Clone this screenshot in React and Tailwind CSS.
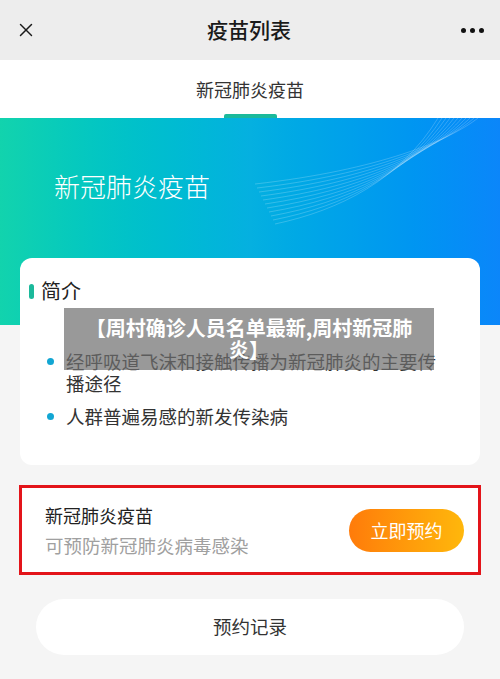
import { X } from 'lucide-react';

const font = { fontFamily: '"Noto Sans CJK SC", "Noto Sans", sans-serif' };

function Waves() {
  const lines = Array.from({ length: 11 }, (_, i) => i);
  return (
    <svg className="absolute left-0 top-0 h-full w-full" viewBox="0 0 500 207">
      {lines.map((i) => (
        <path
          key={i}
          d={`M${478 - i * 4} 0 C ${450 - i * 5} ${22 + i * 4}, ${380 - i * 4} ${52 + i * 4}, ${255 + i * 2} ${66 + i * 4}`}
          fill="none"
          stroke="#ffffff"
          strokeOpacity="0.25"
          strokeWidth="0.8"
        />
      ))}
    </svg>
  );
}

export default function App() {
  return (
    <div className="relative min-h-[679px] w-[500px] overflow-hidden bg-[#f5f5f5]" style={font}>
      {/* header */}
      <div className="flex h-[60px] items-center justify-between bg-[#ededed] px-[15px]">
        <X className="h-[22px] w-[22px] text-[#1a1a1a]" strokeWidth={1.6} />
        <h1 className="text-[21px] font-medium text-[#1a1a1a]">疫苗列表</h1>
        <div className="flex w-[24px] items-center justify-between pr-[1px]">
          <span className="h-[5px] w-[5px] rounded-full bg-[#111]" />
          <span className="h-[5px] w-[5px] rounded-full bg-[#111]" />
          <span className="h-[5px] w-[5px] rounded-full bg-[#111]" />
        </div>
      </div>

      {/* tab */}
      <div className="flex h-[58px] flex-col items-center justify-end bg-white">
        <span className="mb-[11px] text-[18px] text-[#333]">新冠肺炎疫苗</span>
        <span className="h-[4px] w-[53px] rounded-t-[2px] bg-[#1bb99b]" />
      </div>

      {/* banner */}
      <div className="relative h-[207px] bg-gradient-to-r from-[#12d3ad] via-[#05b0e0] to-[#0b86fa]">
        <Waves />
        <div className="relative pl-[54px] pt-[48px] text-[26px] font-light text-white">新冠肺炎疫苗</div>
      </div>

      {/* intro card */}
      <div className="relative -mt-[67px] mx-[20px] h-[207px] rounded-[12px] bg-white pt-[22px]">
        <div className="flex items-center pl-[9px]">
          <span className="h-[15px] w-[5px] rounded-full bg-[#1bb99b]" />
          <span className="ml-[7px] text-[20px] leading-[22px] text-[#222]">简介</span>
        </div>
        <ul className="mt-[48px] space-y-[11px] pl-[27px] pr-[34px] text-[18.5px] leading-[22px] text-[#333]">
          <li className="flex">
            <span className="mt-[8px] h-[7px] w-[7px] shrink-0 rounded-full bg-[#12a6d3]" />
            <span className="ml-[12px]">经呼吸道飞沫和接触传播为新冠肺炎的主要传播途径</span>
          </li>
          <li className="flex">
            <span className="mt-[8px] h-[7px] w-[7px] shrink-0 rounded-full bg-[#12a6d3]" />
            <span className="ml-[12px]">人群普遍易感的新发传染病</span>
          </li>
        </ul>
      </div>

      {/* vaccine row */}
      <div className="mx-[19px] mt-[20px] flex h-[90px] items-center justify-between border-[3px] border-[#e3141a] bg-white pl-[23px] pr-[14px]">
        <div>
          <div className="text-[18px] leading-[22px] text-[#222]">新冠肺炎疫苗</div>
          <div className="mt-[8px] text-[18.5px] leading-[22px] text-[#a0a0a0]">可预防新冠肺炎病毒感染</div>
        </div>
        <button className="h-[43px] w-[115px] rounded-full bg-gradient-to-r from-[#ff7b0a] to-[#ffb70b] text-[18px] text-white">
          立即预约
        </button>
      </div>

      {/* records */}
      <button className="mx-[36px] mt-[24px] flex h-[56px] w-[428px] items-center justify-center rounded-full bg-white text-[18.5px] text-[#333]">
        预约记录
      </button>

      {/* watermark overlay */}
      <div className="absolute left-[64px] top-[308px] flex h-[62px] w-[370px] items-center justify-center bg-[#6e6e6e]/70 px-[16px] text-center text-[20px] font-bold leading-[22px] text-white">
        【周村确诊人员名单最新,周村新冠肺炎】
      </div>
    </div>
  );
}
